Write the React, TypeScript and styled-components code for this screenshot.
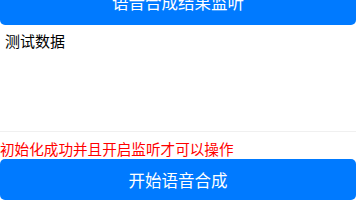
import styled, { createGlobalStyle } from 'styled-components';

const GlobalStyle = createGlobalStyle`
  html, body {
    margin: 0;
    padding: 0;
    background: #ffffff;
    overflow: hidden;
  }
  body {
    font-family: "Noto Sans CJK SC", "Liberation Sans", sans-serif;
  }
`;

const Page = styled.div`
  display: flex;
  flex-direction: column;
  width: 356px;
  height: 200px;
  overflow: hidden;
`;

const ActionButton = styled.button<{ $offset?: number; $height?: number }>`
  flex: none;
  display: flex;
  align-items: center;
  justify-content: center;
  width: 100%;
  height: ${(p) => p.$height ?? 46}px;
  margin: ${(p) => (p.$offset ? `-${p.$offset}px` : '0')} 0 0 0;
  padding: 0;
  border: none;
  border-radius: 5px;
  background-color: #007aff;
  color: #ffffff;
  font-family: "Noto Sans CJK SC", sans-serif;
  font-size: 16.5px;
  cursor: pointer;
`;

const ResultBox = styled.div`
  flex: none;
  box-sizing: border-box;
  height: 107px;
  padding: 6px 5px;
  border-bottom: 1px solid #f0f0f0;
  font-size: 15px;
  line-height: 20px;
  color: #000000;
`;

const Warning = styled.div`
  flex: none;
  margin-top: 7px;
  padding-bottom: 1px;
  font-size: 14.6px;
  line-height: 19px;
  color: #ff0000;
`;

export default function App() {
  return (
    <Page>
      <GlobalStyle />
      <ActionButton $offset={21}>语音合成结果监听</ActionButton>
      <ResultBox>测试数据</ResultBox>
      <Warning>初始化成功并且开启监听才可以操作</Warning>
      <ActionButton $height={41}>开始语音合成</ActionButton>
    </Page>
  );
}
